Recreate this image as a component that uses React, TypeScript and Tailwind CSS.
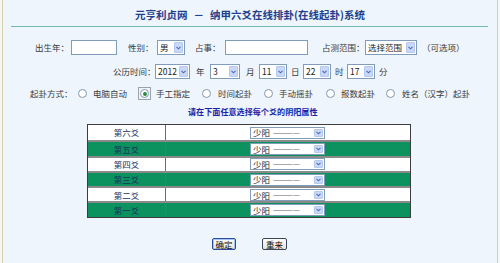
import React from 'react';

const FONT = { fontFamily: '"Noto Sans CJK SC", "Liberation Sans", sans-serif' };

// little XP-style dropdown box
const Sel = ({ w, text, h = 'h-[15px]', cls = '' }: { w: string; text: React.ReactNode; h?: string; cls?: string }) => (
  <div className={`${w} ${h} ${cls} flex shrink-0 items-stretch border border-[#7f9db9] bg-white`}>
    <div className="flex flex-1 items-center overflow-hidden whitespace-nowrap pl-[2px] text-[8.5px] leading-none text-[#222]">
      {text}
    </div>
    <div className="m-px flex w-[9px] items-center justify-center rounded-[1px] border border-[#b4c8f0] bg-[#c9d8f8]">
      <svg width="5" height="4" viewBox="0 0 5 4">
        <polyline points="0.5,0.8 2.5,2.8 4.5,0.8" fill="none" stroke="#4d6bb0" strokeWidth="1.1" />
      </svg>
    </div>
  </div>
);

const Radio = ({ on = false }: { on?: boolean }) => (
  <div className="flex h-[9px] w-[9px] shrink-0 items-center justify-center rounded-full border border-[#8197ad] bg-white">
    {on && <div className="h-[4px] w-[4px] rounded-full bg-[#2b8a3e]" />}
  </div>
);

const Lbl = ({ children, w, cls = '' }: { children: React.ReactNode; w: string; cls?: string }) => (
  <span className={`${w} ${cls} shrink-0 whitespace-nowrap text-[8.5px] leading-none text-[#3a3a3a]`}>{children}</span>
);

const yao = ['第六爻', '第五爻', '第四爻', '第三爻', '第二爻', '第一爻'];

export default function App() {
  return (
    <div className="h-[263px] w-[500px] overflow-hidden bg-[#f6f7f2] px-[2px]" style={FONT}>
      <div className="flex h-full flex-col border-x border-[#d6cfae] bg-[#eef5fd]">
        {/* title */}
        <div className="flex h-[26px] items-center justify-center pt-[4px] text-[10.5px] font-bold text-[#233f8c]">
          <span>元亨利贞网</span>
          <span className="mx-[6px]">－</span>
          <span>纳甲六爻在线排卦(在线起卦)系统</span>
        </div>
        <div className="ml-[8px] h-px w-[477px] bg-[#70b9aa]" />

        {/* row 1 */}
        <div className="mt-[13px] flex h-[15px] items-center pl-[32px]">
          <Lbl w="w-[36px]">出生年：</Lbl>
          <div className="h-[15px] w-[46px] shrink-0 border border-[#7f9db9] bg-white" />
          <Lbl w="w-[29px]" cls="ml-[11px]">性别：</Lbl>
          <Sel w="w-[28px]" text="男" />
          <Lbl w="w-[30px]" cls="ml-[10px]">占事：</Lbl>
          <div className="h-[15px] w-[83px] shrink-0 border border-[#7f9db9] bg-white" />
          <Lbl w="w-[43px]" cls="ml-[14px]">占测范围：</Lbl>
          <Sel w="w-[52px]" text="选择范围" />
          <Lbl w="w-[44px]" cls="ml-[5px]">（可选项）</Lbl>
        </div>

        {/* row 2 */}
        <div className="mt-[9px] flex h-[15px] items-center pl-[110px]">
          <Lbl w="w-[42px]">公历时间：</Lbl>
          <Sel w="w-[35px]" text="2012" />
          <Lbl w="w-[9px]" cls="ml-[6px]">年</Lbl>
          <Sel w="w-[30px]" text="3" cls="ml-[5px]" />
          <Lbl w="w-[9px]" cls="ml-[6px]">月</Lbl>
          <Sel w="w-[28px]" text="11" cls="ml-[4px]" />
          <Lbl w="w-[9px]" cls="ml-[4px]">日</Lbl>
          <Sel w="w-[28px]" text="22" cls="ml-[3px]" />
          <Lbl w="w-[9px]" cls="ml-[4px]">时</Lbl>
          <Sel w="w-[28px]" text="17" cls="ml-[3px]" />
          <Lbl w="w-[9px]" cls="ml-[4px]">分</Lbl>
        </div>

        {/* row 3 */}
        <div className="mt-[8px] flex h-[13px] items-center pl-[27px]">
          <Lbl w="w-[45px]">起卦方式：</Lbl>
          <div className="ml-[3px]"><Radio /></div>
          <Lbl w="w-[34px]" cls="ml-[6px]">电脑自动</Lbl>
          <div className="ml-[11px] flex h-[13px] w-[13px] items-center justify-center border border-[#9aa3ad]">
            <Radio on />
          </div>
          <Lbl w="w-[34px]" cls="ml-[5px]">手工指定</Lbl>
          <div className="ml-[12px]"><Radio /></div>
          <Lbl w="w-[34px]" cls="ml-[7px]">时间起卦</Lbl>
          <div className="ml-[12px]"><Radio /></div>
          <Lbl w="w-[34px]" cls="ml-[6px]">手动摇卦</Lbl>
          <div className="ml-[13px]"><Radio /></div>
          <Lbl w="w-[34px]" cls="ml-[6px]">报数起卦</Lbl>
          <div className="ml-[11px]"><Radio /></div>
          <Lbl w="w-[68px]" cls="ml-[7px]">姓名（汉字）起卦</Lbl>
        </div>

        {/* row 4 */}
        <div className="mt-[6px] flex h-[12px] items-center pl-[185px] text-[8.1px] font-bold leading-none text-[#1a22a6]">
          请在下面任意选择每个爻的阴阳属性
        </div>

        {/* table */}
        <div className="ml-[84px] mt-[6px] w-[324px] border border-[#3d3d3d]">
          {yao.map((name, i) => {
            const green = i % 2 === 1;
            return (
              <div
                key={name}
                className={`flex h-[15.3px] items-stretch ${i > 0 ? 'border-t-2 border-[#8a8a8a]' : ''} ${
                  green ? 'bg-[#0b925f]' : 'bg-white'
                }`}
              >
                <div className="flex w-[78px] items-center justify-center border-r border-[#6b6b6b] text-[8.5px] leading-none text-[#1d3260]">
                  {name}
                </div>
                <div className="w-[84px]" />
                <div className="flex items-center">
                  <Sel
                    w="w-[75px]"
                    h="h-[12px]"
                    text={
                      <>
                        <span>少阳</span>
                        <span className="ml-[3px] text-[8px] text-[#666]">————</span>
                      </>
                    }
                  />
                </div>
              </div>
            );
          })}
        </div>

        {/* buttons */}
        <div className="mt-[20px] flex h-[12px] items-center pl-[209px]">
          <div className="flex h-[12px] w-[24px] items-center justify-center rounded-[2px] border border-[#2a4d9a] bg-gradient-to-b from-white to-[#e6e3d6] text-[8.5px] leading-none text-[#111] shadow-[inset_0_0_0_1px_#a9c1ef]">
            确定
          </div>
          <div className="ml-[26px] flex h-[12px] w-[25px] items-center justify-center rounded-[2px] border border-[#39455a] bg-gradient-to-b from-white to-[#e6e3d6] text-[8.5px] leading-none text-[#111]">
            重来
          </div>
        </div>
      </div>
    </div>
  );
}
